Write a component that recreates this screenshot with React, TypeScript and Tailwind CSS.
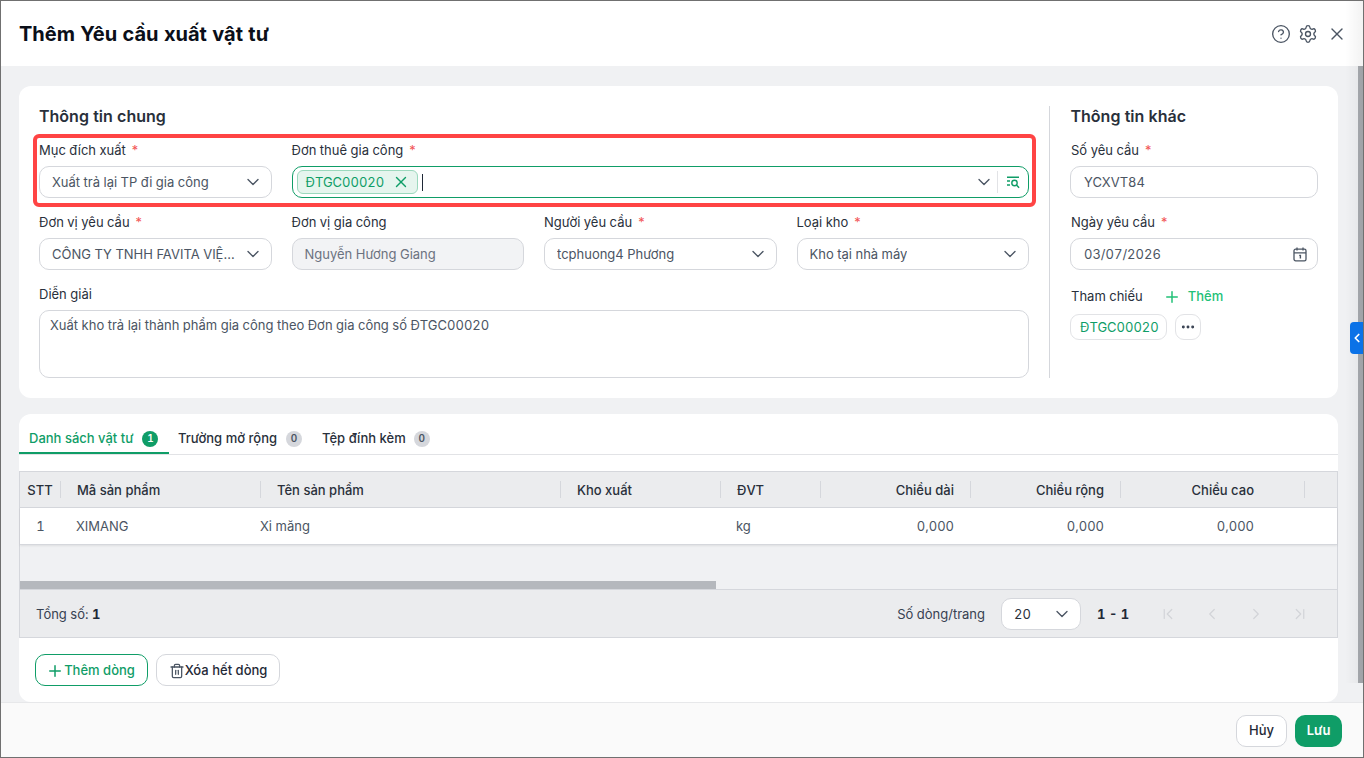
import React from 'react';
import {
  ChevronDown,
  ChevronFirst,
  ChevronLast,
  ChevronLeft,
  ChevronRight,
  CircleHelp,
  Ellipsis,
  Plus,
  Settings,
  Trash2,
  X,
} from 'lucide-react';

const Required = () => <span className="ml-[5px] text-[#f25555]">*</span>;

function Label({ text, required }: { text: string; required?: boolean }) {
  return (
    <div className="mb-1.5 h-5 whitespace-nowrap text-[13px] leading-5 text-[#29303b]">
      {text}
      {required && <Required />}
    </div>
  );
}

function Select({ value }: { value: string }) {
  return (
    <div className="flex h-8 items-center justify-between rounded-[10px] border border-[#d5d7dc] bg-white pl-3 pr-2">
      <span className="truncate pt-px text-[13px] text-[#4b5563]">{value}</span>
      <ChevronDown size={20} strokeWidth={1.6} className="ml-1.5 shrink-0 text-[#4b5563]" />
    </div>
  );
}

function SearchListIcon() {
  return (
    <svg width="14" height="13" viewBox="0 0 14 13" fill="none" stroke="#0f9d67" strokeWidth="1.4">
      <path d="M1 1.2h12M1 5h3M1 9h3" />
      <circle cx="8.5" cy="7" r="2.7" />
      <path d="M10.5 9l2.6 2.8" />
    </svg>
  );
}

function CalendarIcon() {
  return (
    <svg width="14" height="15" viewBox="0 0 14 15" fill="none" stroke="#4b5563" strokeWidth="1.3">
      <rect x="1" y="2.2" width="12" height="11.6" rx="1.6" />
      <path d="M1 5.8h12M4 .6v3M10 .6v3" />
      <path d="M6.2 8.4h1.2v3" strokeWidth="1.4" />
    </svg>
  );
}

const columns = [
  { title: 'STT', width: 'w-[41px]', head: 'justify-center', cell: 'justify-center', value: '1' },
  { title: 'Mã sản phẩm', width: 'w-[200px]', head: 'pl-[16px]', cell: 'pl-[15px]', value: 'XIMANG' },
  { title: 'Tên sản phẩm', width: 'w-[300px]', head: 'pl-[16px]', cell: '-ml-px pr-px', value: 'Xi măng' },
  { title: 'Kho xuất', width: 'w-[160px]', head: 'pl-[16px]', cell: 'pl-[16px]', value: '' },
  { title: 'ĐVT', width: 'w-[100px]', head: 'pl-[16px]', cell: 'pl-[16px]', value: 'kg' },
  { title: 'Chiều dài', width: 'w-[150px]', head: 'justify-end pr-[16px]', cell: 'justify-end pr-[16px]', value: '0,000' },
  { title: 'Chiều rộng', width: 'w-[150px]', head: 'justify-end pr-[16px]', cell: 'justify-end pr-[16px]', value: '0,000' },
  { title: 'Chiều cao', width: 'w-[184px]', head: 'justify-end pr-[50px]', cell: 'justify-end pr-[50px]', value: '0,000' },
];

const tabs = [
  { label: 'Danh sách vật tư', count: 1, active: true, box: 'w-[150px] pl-[10px]', badge: 'ml-[9px]' },
  { label: 'Trường mở rộng', count: 0, active: false, box: 'w-[143px] pl-[9px]', badge: 'ml-[9px]' },
  { label: 'Tệp đính kèm', count: 0, active: false, box: 'w-[130px] pl-[10px]', badge: 'ml-2' },
];

export default function App() {
  return (
    <div
      className="relative flex h-[758px] w-[1364px] flex-col overflow-hidden border border-[#707070] bg-white tabular-nums"
      style={{ fontFamily: 'Inter, "Noto Sans", sans-serif' }}
    >
      {/* header */}
      <header className="flex h-[65px] shrink-0 items-center justify-between bg-white pl-[18px] pr-[16px]">
        <h1 className="text-[20px] font-bold text-[#0b0f19]">Thêm Yêu cầu xuất vật tư</h1>
        <div className="flex items-center text-[#4b5563]">
          <CircleHelp size={20} strokeWidth={1.6} />
          <Settings size={20} strokeWidth={1.6} className="ml-[7px]" />
          <X size={20} strokeWidth={1.6} className="ml-[9px]" />
        </div>
      </header>

      {/* body */}
      <div className="flex min-h-0 flex-1 bg-[#f0f1f3]">
        <main className="flex w-[1357px] flex-col gap-4 pl-[18px] pr-5 pt-5">
          <section className="flex h-[312px] rounded-xl bg-white pl-5 pt-5">
            <div className="w-[990px] shrink-0">
              <h2 className="mb-3 h-[22px] text-[16px] font-semibold leading-[20px] text-[#29303b]">Thông tin chung</h2>
              <div className="grid grid-cols-4 gap-x-5 gap-y-3.5">
                <div>
                  <Label text="Mục đích xuất" required />
                  <Select value="Xuất trả lại TP đi gia công" />
                </div>
                <div className="col-span-3">
                  <Label text="Đơn thuê gia công" required />
                  <div className="flex h-8 items-center rounded-[10px] border border-[#0f9d67] bg-white pl-1">
                    <div className="flex h-6 items-center rounded-md border border-[#9bd8bd] bg-[#e6f5ee] pl-2 pr-[7px]">
                      <span className="pt-px text-[13px] text-[#0f9d67]">ĐTGC00020</span>
                      <X size={18} strokeWidth={1.8} className="ml-2 text-[#0f9d67]" />
                    </div>
                    <span className="ml-1 h-[17px] w-px bg-[#1f2937]" />
                    <ChevronDown size={20} strokeWidth={1.6} className="ml-auto text-[#4b5563]" />
                    <span className="ml-[3px] h-[22px] w-px bg-[#e2e3e6]" />
                    <span className="flex w-[30px] justify-center">
                      <SearchListIcon />
                    </span>
                  </div>
                </div>
                <div>
                  <Label text="Đơn vị yêu cầu" required />
                  <Select value="CÔNG TY TNHH FAVITA VIỆT NAM" />
                </div>
                <div>
                  <Label text="Đơn vị gia công" />
                  <div className="flex h-8 items-center rounded-[10px] border border-[#d5d7dc] bg-[#f2f3f5] pl-3 pt-px text-[13px] text-[#6b7280]">
                    Nguyễn Hương Giang
                  </div>
                </div>
                <div>
                  <Label text="Người yêu cầu" required />
                  <Select value="tcphuong4 Phương" />
                </div>
                <div>
                  <Label text="Loại kho" required />
                  <Select value="Kho tại nhà máy" />
                </div>
                <div className="col-span-4">
                  <Label text="Diễn giải" />
                  <div className="h-[68px] rounded-[10px] border border-[#d5d7dc] bg-white px-[10px] py-[4px] text-[13px] leading-5 text-[#4b5563]">
                    Xuất kho trả lại thành phẩm gia công theo Đơn gia công số ĐTGC00020
                  </div>
                </div>
              </div>
            </div>

            <div className="mb-5 ml-5 w-px bg-[#d5d7dc]" />

            <div className="ml-[20px] w-[248px]">
              <h2 className="mb-3 ml-[0.5px] h-[22px] text-[16px] font-semibold leading-[20px] text-[#29303b]">Thông tin khác</h2>
              <div className="ml-px">
                <Label text="Số yêu cầu" required />
              </div>
              <div className="flex h-8 items-center rounded-[10px] border border-[#d5d7dc] pl-[13px] pt-px text-[13px] text-[#4b5563]">
                YCXVT84
              </div>
              <div className="ml-px mt-3.5">
                <Label text="Ngày yêu cầu" required />
              </div>
              <div className="flex h-8 items-center justify-between rounded-[10px] border border-[#d5d7dc] pl-[13px] pr-[10px] text-[13px] text-[#4b5563]">
                <span className="pt-px">03/07/2026</span>
                <CalendarIcon />
              </div>
              <div className="ml-px mt-[17px] flex h-5 items-center text-[13px] text-[#29303b]">
                Tham chiếu
                <Plus size={18} strokeWidth={2} className="ml-5 text-[#22c177]" />
                <span className="ml-[7px] font-medium text-[#22c177]">Thêm</span>
              </div>
              <div className="mt-[7px] flex items-center gap-2">
                <span className="flex h-[26px] items-center rounded-[9px] border border-[#e2e3e6] pl-[9px] pr-[7px] pt-px text-[13px] text-[#0f9d67]">
                  ĐTGC00020
                </span>
                <span className="flex h-[26px] w-[26px] items-center justify-center rounded-[9px] border border-[#e2e3e6] text-[#374151]">
                  <Ellipsis size={16} strokeWidth={2.4} />
                </span>
              </div>
            </div>
          </section>

          <section className="flex h-[288px] flex-col rounded-xl bg-white">
            <div className="flex h-[41px] shrink-0 border-b border-[#e2e3e6]">
              {tabs.map((tab) => (
                <div
                  key={tab.label}
                  className={`flex h-[40px] items-center border-b-2 pt-[11px] ${tab.box} ${tab.active ? 'border-[#0f9d67]' : 'border-transparent'}`}
                >
                  <span className={`text-[13px] font-medium ${tab.active ? 'text-[#0f9d67]' : 'text-[#29303b]'}`}>
                    {tab.label}
                  </span>
                  <span
                    className={`flex h-4 w-4 items-center justify-center rounded-full text-[10px] font-semibold ${tab.badge} ${
                      tab.active ? 'bg-[#0f9d67] text-white' : 'bg-[#d5d7dc] text-[#4b5563]'
                    }`}
                  >
                    {tab.count}
                  </span>
                </div>
              ))}
            </div>

            <div className="mt-4 border border-[#d5d7dc] bg-[#f0f1f3]">
              <div className="flex h-[36px] border-b border-[#d5d7dc] bg-[#ebecee]">
                {columns.map((col) => (
                  <div key={col.title} className={`flex ${col.width} h-full items-center`}>
                    <div className={`flex flex-1 pt-[2px] ${col.head} text-[13px] font-medium text-[#29303b]`}>{col.title}</div>
                    <span className="h-[17px] w-px bg-[#d5d7dc]" />
                  </div>
                ))}
              </div>
              <div className="flex h-[37px] border-b border-[#d5d7dc] bg-white shadow-[0_1px_2px_rgba(0,0,0,0.08)]">
                {columns.map((col) => (
                  <div key={col.title} className={`flex ${col.width} items-center pt-px ${col.cell} text-[13px] text-[#4b5563]`}>
                    {col.value}
                  </div>
                ))}
              </div>
              <div className="h-[36px]" />
              <div className="h-2">
                <div className="h-2 w-[696px] bg-[#b5b8bd]" />
              </div>
              <div className="flex h-[48px] items-center border-t border-[#d5d7dc] bg-[#ebecee] pl-4 pr-[28px] pt-px text-[13px] text-[#374151]">
                <span className="pt-[2px]">
                  Tổng số: <b className="font-bold text-[#1f2937]">1</b>
                </span>
                <span className="ml-auto pt-[2px]">Số dòng/trang</span>
                <div className="ml-4 flex h-8 w-20 items-center justify-between rounded-[10px] border border-[#d5d7dc] bg-white pl-3 pr-2 text-[#29303b]">
                  <span className="pt-px">20</span>
                  <ChevronDown size={20} strokeWidth={1.6} className="text-[#4b5563]" />
                </div>
                <b className="ml-4 w-8 whitespace-nowrap pt-[2px] font-bold text-[#1f2937]">1 - 1</b>
                <div className="ml-[30px] flex items-center gap-[26px] text-[#d2d4d8]">
                  <ChevronFirst size={18} strokeWidth={1.6} />
                  <ChevronLeft size={18} strokeWidth={1.6} />
                  <ChevronRight size={18} strokeWidth={1.6} />
                  <ChevronLast size={18} strokeWidth={1.6} />
                </div>
              </div>
            </div>

            <div className="mt-4 flex gap-2 pl-4">
              <button className="flex h-8 w-[113px] items-center justify-center rounded-[10px] border border-[#0f9d67] pr-[2px] pt-px text-[13px] font-medium text-[#0f9d67]">
                <Plus size={18} strokeWidth={2} />
                Thêm dòng
              </button>
              <button className="flex h-8 w-[124px] items-center justify-center rounded-[10px] border border-[#d5d7dc] pt-px text-[13px] font-medium text-[#1f2937]">
                <Trash2 size={16} strokeWidth={1.9} className="text-[#4b5563]" />
                Xóa hết dòng
              </button>
            </div>
          </section>
        </main>
        <div className="ml-auto h-[617px] w-[5px] bg-[#a8abb0]" />
      </div>

      {/* footer */}
      <footer className="flex h-[55px] shrink-0 items-center justify-end gap-2 border-t border-[#e7e8ea] bg-[#fafafa] pr-[21px] pt-[2px]">
        <button className="h-8 w-[51px] rounded-[10px] border border-[#d5d7dc] bg-white text-[13px] font-medium text-[#1f2937]">
          Hủy
        </button>
        <button className="h-8 w-[47px] rounded-[10px] bg-[#0f9d67] text-[13px] font-semibold text-white">Lưu</button>
      </footer>

      {/* overlays */}
      <div className="pointer-events-none absolute right-0 top-0 h-[682px] w-[18px] bg-gradient-to-r from-transparent to-black/5" />
      <div className="pointer-events-none absolute left-[32px] top-[133px] h-[73px] w-[1003px] rounded-[6px] border-[4px] border-[#ff4444]" />
      <div className="absolute left-[1349px] top-[321px] flex h-[32px] w-[14px] items-center justify-center rounded-l-[4px] bg-[#0b72e7] text-white">
        <ChevronLeft size={18} strokeWidth={3} />
      </div>
    </div>
  );
}
